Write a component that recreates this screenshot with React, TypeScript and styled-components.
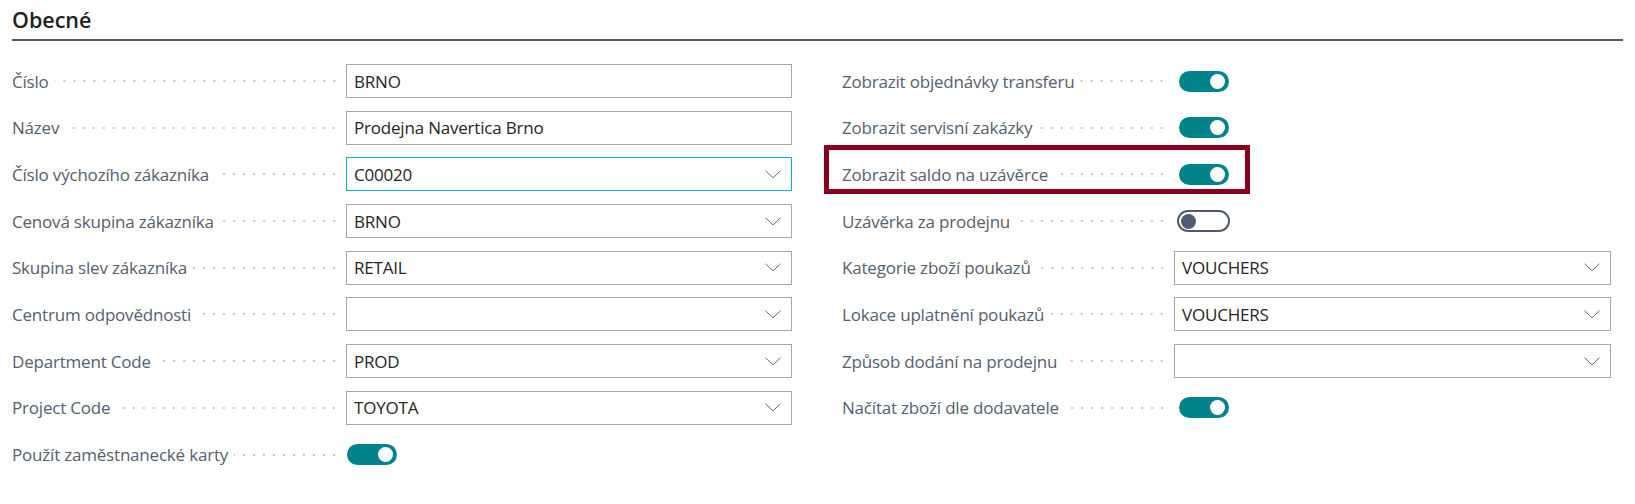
import React from "react";
import styled, { createGlobalStyle } from "styled-components";

const Global = createGlobalStyle`
  html, body { margin: 0; padding: 0; background: #ffffff; }
  body { font-family: "Open Sans", "Noto Sans", Arial, sans-serif; }
  * { box-sizing: border-box; }
`;

const Page = styled.div`
  width: 1635px;
  height: 504px;
  padding: 0 12px;
  background: #fff;
`;

const Header = styled.div`
  height: 41px;
  border-bottom: 2px solid #505c6d;
  padding-top: 6px;
`;

const Title = styled.h2`
  margin: 0;
  font-size: 21.5px;
  line-height: 28px;
  font-weight: 600;
  color: #212121;
`;

const Columns = styled.div`
  display: grid;
  grid-template-columns: 780px 769px;
  column-gap: 50px;
  margin-top: 23px;
`;

const Column = styled.div`
  display: flex;
  flex-direction: column;
  row-gap: 12.7px;
`;

const Row = styled.div`
  position: relative;
  display: flex;
  align-items: center;
  height: 34px;
`;

const Label = styled.div<{ $w: number }>`
  display: flex;
  align-items: center;
  width: ${(p) => p.$w}px;
  flex: none;
  height: 100%;
`;

const LabelText = styled.span`
  font-size: 17px;
  letter-spacing: -0.2px;
  color: #56606f;
  white-space: nowrap;
`;

const Dots = styled.span`
  flex: 1;
  height: 4px;
  margin: 0 7px 0 6px;
  background-image: radial-gradient(circle at center, #c8c8c8 1px, transparent 1.4px);
  background-size: 10px 4px;
  background-position: right center;
  background-repeat: repeat-x;
`;

const Field = styled.div<{ $focus?: boolean }>`
  flex: 1;
  height: 34px;
  display: flex;
  align-items: center;
  justify-content: space-between;
  padding: 0 10px 0 7px;
  border: 1px solid ${(p) => (p.$focus ? "#00b7c3" : "#a6a6a6")};
  font-size: 17px;
  letter-spacing: -0.2px;
  color: #262626;
  background: #fff;
`;

const Chevron = styled.svg`
  flex: none;
  width: 16px;
  height: 9px;
`;

const Track = styled.div<{ $on: boolean; $shift: number }>`
  margin-left: ${(p) => p.$shift + (p.$on ? 2 : 0)}px;
  width: ${(p) => (p.$on ? "50px" : "53px")};
  height: ${(p) => (p.$on ? "21px" : "22px")};
  border-radius: 12px;
  display: flex;
  align-items: center;
  justify-content: ${(p) => (p.$on ? "flex-end" : "flex-start")};
  padding: 0 ${(p) => (p.$on ? "4px" : "2px")};
  background: ${(p) => (p.$on ? "#00838a" : "#fff")};
  border: ${(p) => (p.$on ? "none" : "2px solid #505c6d")};
`;

const Knob = styled.div<{ $on: boolean }>`
  width: 15px;
  height: 15px;
  border-radius: 50%;
  background: ${(p) => (p.$on ? "#ffffff" : "#505c6d")};
`;

const Highlight = styled.div`
  position: absolute;
  left: -18px;
  top: -12px;
  width: 426px;
  height: 49px;
  border: 5px solid #88001b;
  pointer-events: none;
`;

type Item =
  | { label: string; kind: "text"; value: string; focus?: boolean }
  | { label: string; kind: "select"; value: string; focus?: boolean }
  | { label: string; kind: "toggle"; on: boolean; mark?: boolean };

const left: Item[] = [
  { label: "Číslo", kind: "text", value: "BRNO" },
  { label: "Název", kind: "text", value: "Prodejna Navertica Brno" },
  { label: "Číslo výchozího zákazníka", kind: "select", value: "C00020", focus: true },
  { label: "Cenová skupina zákazníka", kind: "select", value: "BRNO" },
  { label: "Skupina slev zákazníka", kind: "select", value: "RETAIL" },
  { label: "Centrum odpovědnosti", kind: "select", value: "" },
  { label: "Department Code", kind: "select", value: "PROD" },
  { label: "Project Code", kind: "select", value: "TOYOTA" },
  { label: "Použít zaměstnanecké karty", kind: "toggle", on: true },
];

const right: Item[] = [
  { label: "Zobrazit objednávky transferu", kind: "toggle", on: true },
  { label: "Zobrazit servisní zakázky", kind: "toggle", on: true },
  { label: "Zobrazit saldo na uzávěrce", kind: "toggle", on: true, mark: true },
  { label: "Uzávěrka za prodejnu", kind: "toggle", on: false },
  { label: "Kategorie zboží poukazů", kind: "select", value: "VOUCHERS" },
  { label: "Lokace uplatnění poukazů", kind: "select", value: "VOUCHERS" },
  { label: "Způsob dodání na prodejnu", kind: "select", value: "" },
  { label: "Načítat zboží dle dodavatele", kind: "toggle", on: true },
];

const ChevronIcon = () => (
  <Chevron viewBox="0 0 16 9">
    <polyline points="0.5,0.8 8,7.8 15.5,0.8" fill="none" stroke="#6a6a6a" strokeWidth="1" />
  </Chevron>
);

const FieldRow: React.FC<{ item: Item; labelWidth: number; shift: number }> = ({
  item,
  labelWidth,
  shift,
}) => (
  <Row>
    <Label $w={labelWidth}>
      <LabelText>{item.label}</LabelText>
      <Dots />
    </Label>
    {item.kind === "toggle" ? (
      <Track $on={item.on} $shift={shift}>
        <Knob $on={item.on} />
      </Track>
    ) : (
      <Field $focus={item.focus}>
        <span>{item.value}</span>
        {item.kind === "select" && <ChevronIcon />}
      </Field>
    )}
    {item.kind === "toggle" && item.mark && <Highlight />}
  </Row>
);

export default function App() {
  return (
    <Page>
      <Global />
      <Header>
        <Title>Obecné</Title>
      </Header>
      <Columns>
        <Column>
          {left.map((it) => (
            <FieldRow key={it.label} item={it} labelWidth={334} shift={-1} />
          ))}
        </Column>
        <Column>
          {right.map((it) => (
            <FieldRow key={it.label} item={it} labelWidth={332} shift={3} />
          ))}
        </Column>
      </Columns>
    </Page>
  );
}
